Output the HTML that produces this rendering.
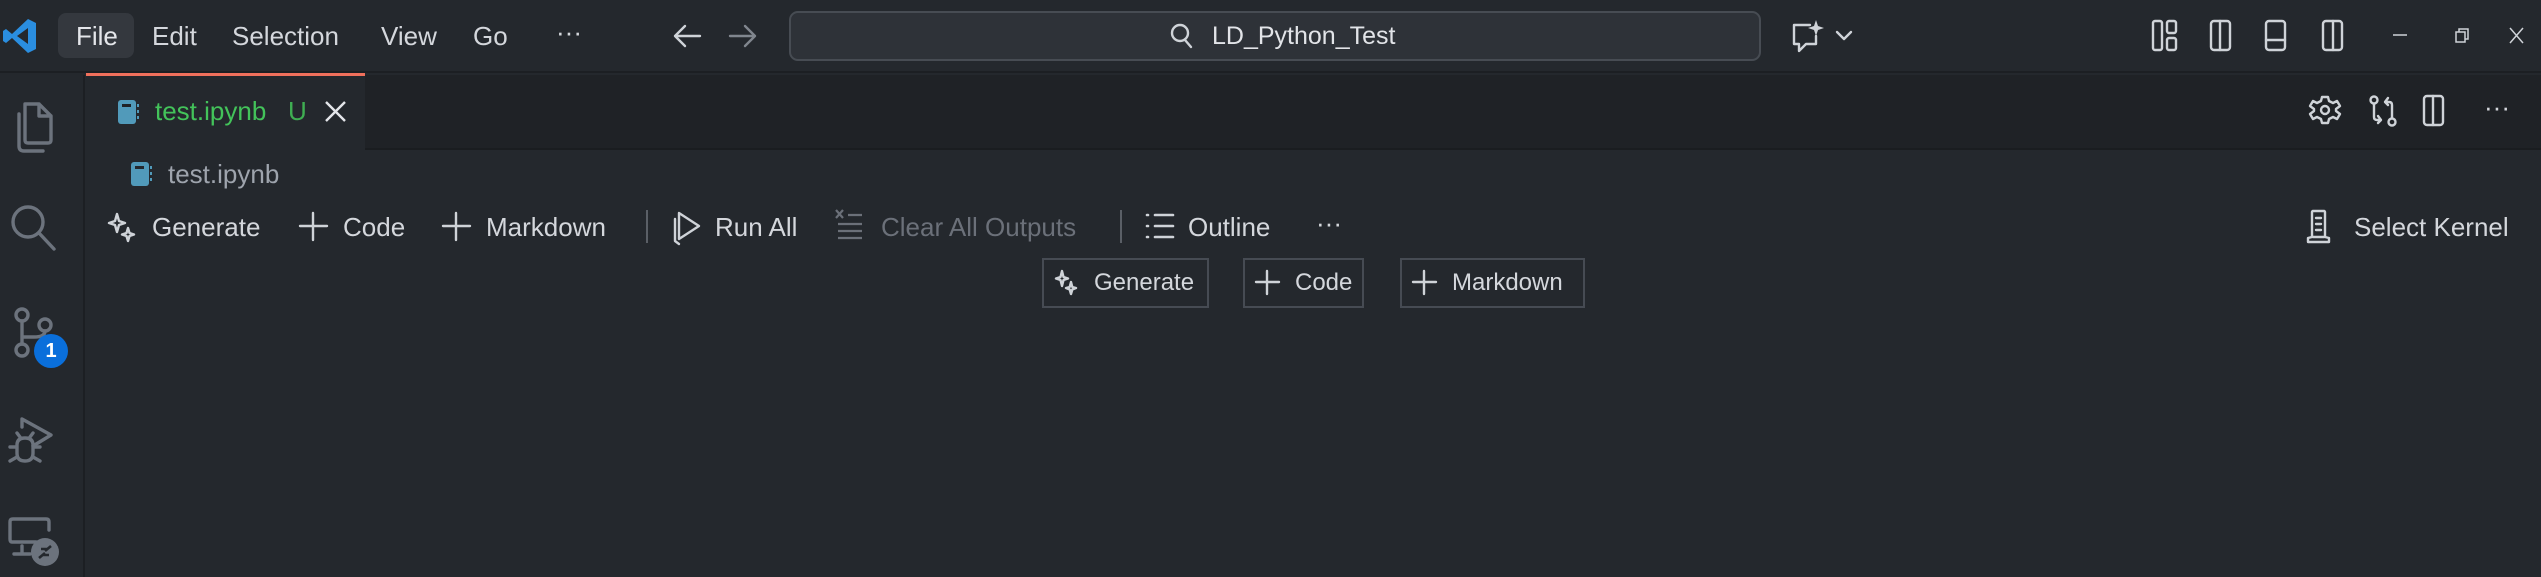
<!DOCTYPE html>
<html><head><meta charset="utf-8"><style>
*{margin:0;padding:0;box-sizing:border-box}
body{width:2541px;height:577px;background:#24282d;font-family:"Liberation Sans",sans-serif;color:#d4d7dc;position:relative;overflow:hidden}
.a{position:absolute;white-space:nowrap}
.t{font-size:26px;line-height:30px}
svg{position:absolute;overflow:visible}
.ic{fill:none;stroke:#cfd3d8;stroke-width:2.4;stroke-linecap:round;stroke-linejoin:round}
.ab{fill:none;stroke:#6c737d;stroke-width:3.4;stroke-linecap:round;stroke-linejoin:round}
.btn{position:absolute;border:2px solid #464b53;top:258px;height:50px}
</style></head><body>
<!-- title bar -->
<div class="a" style="left:0;top:0;width:2541px;height:73px;background:#24282d;border-bottom:2px solid #1c1f23"></div>
<svg style="left:3px;top:18px" width="34" height="36" viewBox="0 0 34 36"><path d="M25 1 L33 5 V31 L25 35 L9 20 L3 25 L0 23 V13 L3 11 L9 16 Z M25 10 L14 18 L25 26 Z" fill="#2a8ee0" fill-rule="evenodd"/></svg>
<div class="a" style="left:58px;top:13px;width:76px;height:45px;background:#34383e;border-radius:8px"></div>
<div class="a t" style="left:76px;top:21px;color:#e4e6ea">File</div>
<div class="a t" style="left:152px;top:21px">Edit</div>
<div class="a t" style="left:232px;top:21px">Selection</div>
<div class="a t" style="left:381px;top:21px">View</div>
<div class="a t" style="left:473px;top:21px">Go</div>
<div class="a t" style="left:556px;top:17px">···</div>
<svg style="left:672px;top:24px" width="30" height="24"><path class="ic" d="M28 12 H3 M13 2 L3 12 L13 22"/></svg>
<svg style="left:728px;top:24px" width="30" height="24"><path class="ic" style="stroke:#80868e" d="M2 12 H27 M17 2 L27 12 L17 22"/></svg>
<div class="a" style="left:789px;top:11px;width:972px;height:50px;background:#2e3238;border:2px solid #474c53;border-radius:9px"></div>
<svg style="left:1170px;top:23px" width="24" height="26"><circle class="ic" cx="10" cy="10" r="8"/><path class="ic" d="M15 17 L21 24"/></svg>
<div class="a" style="left:1212px;top:21px;font-size:25px;line-height:30px;color:#e2e4e8">LD_Python_Test</div>
<svg style="left:1790px;top:20px" width="40" height="32"><path class="ic" d="M20 5 H4 V24 H9 V31 L16 24 H26 V16"/><path d="M26 0 L28 6 L34 8 L28 10 L26 16 L24 10 L18 8 L24 6 Z" fill="#cfd3d8"/></svg>
<svg style="left:1836px;top:31px" width="16" height="10"><path class="ic" d="M1 1 L8 8 L15 1"/></svg>
<svg style="left:2152px;top:20px" width="30" height="32"><rect class="ic" x="1" y="1" width="9" height="29" rx="2"/><rect class="ic" x="15" y="1" width="9" height="12" rx="2"/><rect class="ic" x="15" y="18" width="9" height="12" rx="2"/></svg>
<svg style="left:2210px;top:20px" width="30" height="32"><rect class="ic" x="1" y="1" width="19" height="29" rx="3"/><path class="ic" d="M10 1 V30"/></svg>
<svg style="left:2265px;top:20px" width="30" height="32"><rect class="ic" x="1" y="1" width="19" height="29" rx="3"/><path class="ic" d="M1 20 H20"/></svg>
<svg style="left:2322px;top:20px" width="30" height="32"><rect class="ic" x="1" y="1" width="19" height="29" rx="3"/><path class="ic" d="M11 1 V30"/></svg>
<svg style="left:2393px;top:34px" width="16" height="4"><path stroke="#cfd3d8" stroke-width="1.5" d="M0 1 H14"/></svg>
<svg style="left:2455px;top:28px" width="16" height="16"><rect fill="none" stroke="#cfd3d8" stroke-width="1.5" x="1" y="4" width="9" height="10"/><path fill="none" stroke="#cfd3d8" stroke-width="1.5" d="M4 4 V1 H13 V11 H10"/></svg>
<svg style="left:2509px;top:27px" width="16" height="18"><path stroke="#cfd3d8" stroke-width="1.5" d="M1 1 L14 16 M14 1 L1 16"/></svg>
<!-- activity bar -->
<div class="a" style="left:0;top:75px;width:85px;height:502px;background:#24282d;border-right:2px solid #1c1f23"></div>
<svg style="left:11px;top:102px" width="44" height="52"><path class="ab" d="M14 2 H28 L40 14 V38 Q40 41 37 41 H17 Q14 41 14 38 Z M28 2 V14 H40"/><path class="ab" d="M8 12 V44 Q8 49 13 49 H32"/></svg>
<svg style="left:10px;top:204px" width="48" height="50"><circle class="ab" cx="18" cy="18" r="15"/><path class="ab" d="M29 29 L44 45"/></svg>
<svg style="left:14px;top:307px" width="40" height="52"><circle class="ab" cx="8" cy="8" r="6"/><circle class="ab" cx="8" cy="43" r="6"/><circle class="ab" cx="31" cy="18" r="6"/><path class="ab" d="M8 14 V37 M8 30 H20 Q31 30 31 24"/></svg>
<div class="a" style="left:34px;top:334px;width:34px;height:34px;border-radius:17px;background:#0a6fdb;color:#fff;font-weight:bold;font-size:20px;line-height:34px;text-align:center">1</div>
<svg style="left:8px;top:417px" width="48" height="48"><path class="ab" d="M14 10 V2 L43 18 L25 29"/><path class="ab" d="M9 28 Q9 21 17 21 Q25 21 25 28 V36 Q25 44 17 44 Q9 44 9 36 Z M2 30 H9 M25 30 H32 M2 44 L9 40 M32 44 L25 40 M12 20 L9 16 M22 20 L25 16"/></svg>
<svg style="left:8px;top:518px" width="52" height="50"><path class="ab" d="M28 24 H4 Q2 24 2 21 V4 Q2 1 5 1 H38 Q41 1 41 4 V12 M14 28 V35 M6 36 H22"/><circle cx="37" cy="34" r="14" fill="#6c737d"/><path stroke="#24282d" stroke-width="2.6" fill="none" d="M31 40 L37 35 M43 28 L37 33 M33 31 L39 31 M35 37 L41 37"/></svg>
<!-- tab bar -->
<div class="a" style="left:87px;top:75px;width:2454px;height:75px;background:#1f2226;border-bottom:2px solid #1a1d20"></div>
<div class="a" style="left:86px;top:73px;width:279px;height:77px;background:#24282d;border-top:3px solid #f0705c"></div>
<svg style="left:118px;top:100px" width="22" height="24"><rect x="0" y="0" width="18" height="24" rx="3" fill="#519aba"/><rect x="4" y="4" width="9" height="3" fill="#1f2226"/><path d="M20 4 V7 M20 10 V13 M20 16 V19" stroke="#519aba" stroke-width="2"/></svg>
<div class="a t" style="left:155px;top:96px;color:#43c35a">test.ipynb</div>
<div class="a t" style="left:288px;top:96px;color:#3fae52">U</div>
<svg style="left:325px;top:101px" width="22" height="22"><path stroke="#e4e6ea" stroke-width="2.4" d="M1 1 L20 20 M20 1 L1 20"/></svg>
<svg style="left:2310px;top:95px" width="30" height="30"><circle class="ic" cx="15" cy="15" r="4"/><path class="ic" d="M12 2 H18 L19 6 L23 8 L27 6 L30 11 L26 14 V16 L30 19 L27 24 L23 22 L19 24 L18 28 H12 L11 24 L7 22 L3 24 L0 19 L4 16 V14 L0 11 L3 6 L7 8 L11 6 Z"/></svg>
<svg style="left:2368px;top:95px" width="30" height="32"><circle class="ic" cx="6" cy="5" r="3.5"/><circle class="ic" cx="24" cy="27" r="3.5"/><path class="ic" d="M6 9 V22 Q6 25 9 25 H13 M10 21 L13 25 L10 28 M24 23 V10 Q24 7 21 7 H17 M20 3 L17 7 L20 10"/></svg>
<svg style="left:2423px;top:95px" width="30" height="32"><rect class="ic" x="1" y="1" width="19" height="29" rx="3"/><path class="ic" d="M10 1 V30"/></svg>
<div class="a t" style="left:2484px;top:92px">···</div>
<!-- breadcrumb -->
<svg style="left:131px;top:162px" width="22" height="24"><rect x="0" y="0" width="18" height="24" rx="3" fill="#519aba"/><rect x="4" y="4" width="9" height="3" fill="#24282d"/><path d="M20 4 V7 M20 10 V13 M20 16 V19" stroke="#519aba" stroke-width="2"/></svg>
<div class="a t" style="left:168px;top:159px;color:#9ea4ad">test.ipynb</div>
<!-- toolbar -->
<svg style="left:108px;top:213px" width="28" height="30"><path d="M9 1 L11 8 L17 10 L11 12 L9 19 L7 12 L1 10 L7 8 Z" class="ic" stroke-width="2"/><path d="M20 15 L21.5 20 L26 21.5 L21.5 23 L20 28 L18.5 23 L14 21.5 L18.5 20 Z" class="ic" stroke-width="2"/></svg>
<div class="a t" style="left:152px;top:212px">Generate</div>
<svg style="left:299px;top:212px" width="30" height="30"><path class="ic" d="M14 1 V28 M1 14 H28"/></svg>
<div class="a t" style="left:343px;top:212px">Code</div>
<svg style="left:442px;top:212px" width="30" height="30"><path class="ic" d="M14 1 V28 M1 14 H28"/></svg>
<div class="a t" style="left:486px;top:212px">Markdown</div>
<div class="a" style="left:646px;top:210px;width:2px;height:33px;background:#5a5f66"></div>
<svg style="left:671px;top:211px" width="30" height="34"><path class="ic" d="M8 2 L28 15 L8 28 Z"/><path class="ic" d="M4 8 V30 L8 33"/></svg>
<div class="a t" style="left:715px;top:212px">Run All</div>
<svg style="left:834px;top:208px" width="32" height="32"><path stroke="#6b7079" stroke-width="2.2" fill="none" d="M2 2 L9 10 M9 2 L2 10 M14 7 H28 M4 16 H28 M4 23 H28 M4 30 H28"/></svg>
<div class="a t" style="left:881px;top:212px;color:#6b7079">Clear All Outputs</div>
<div class="a" style="left:1120px;top:210px;width:2px;height:33px;background:#5a5f66"></div>
<svg style="left:1145px;top:212px" width="32" height="30"><path stroke="#cfd3d8" stroke-width="2.6" fill="none" stroke-linecap="round" d="M2 3 H3 M2 14 H3 M2 25 H3 M10 3 H28 M10 14 H28 M10 25 H28"/></svg>
<div class="a t" style="left:1188px;top:212px">Outline</div>
<div class="a t" style="left:1316px;top:208px">···</div>
<svg style="left:2307px;top:210px" width="24" height="34"><rect class="ic" x="5" y="1" width="13" height="26" rx="1"/><path class="ic" d="M9 8 H14 M9 14 H14 M9 20 H14 M1 32 V28 L5 27 M18 27 L22 28 V32 H1"/></svg>
<div class="a t" style="left:2354px;top:212px">Select Kernel</div>
<!-- cell buttons -->
<div class="btn" style="left:1042px;width:167px"></div>
<svg style="left:1055px;top:270px" width="24" height="26"><path d="M7 1 L8.5 7 L13 8.5 L8.5 10 L7 16 L5.5 10 L1 8.5 L5.5 7 Z" class="ic" stroke-width="1.8"/><path d="M16 12 L17.3 17 L21 18 L17.3 19.5 L16 24 L14.7 19.5 L11 18 L14.7 17 Z" class="ic" stroke-width="1.8"/></svg>
<div class="a" style="left:1094px;top:268px;font-size:24px;line-height:30px">Generate</div>
<div class="btn" style="left:1243px;width:121px"></div>
<svg style="left:1255px;top:270px" width="26" height="26"><path class="ic" d="M12 1 V24 M1 12 H24"/></svg>
<div class="a" style="left:1295px;top:268px;font-size:24px;line-height:30px">Code</div>
<div class="btn" style="left:1400px;width:185px"></div>
<svg style="left:1412px;top:270px" width="26" height="26"><path class="ic" d="M12 1 V24 M1 12 H24"/></svg>
<div class="a" style="left:1452px;top:268px;font-size:24px;line-height:30px">Markdown</div>
</body></html>
